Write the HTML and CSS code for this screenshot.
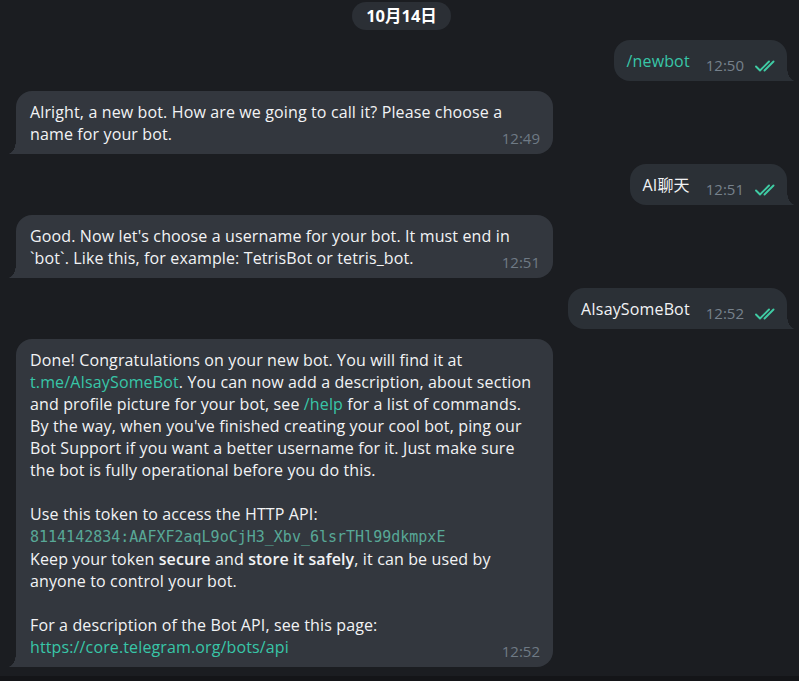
FILE: index.html
```html
<!DOCTYPE html>
<html lang="zh">
<head>
<meta charset="utf-8">
<link rel="stylesheet" href="styles.css">
</head>
<body>
<div class="chat">
  <div class="date-row"><span class="date">10月14日</span></div>

  <div class="msg out">
    <div class="bubble">
      <span class="text link">/newbot</span>
      <span class="time">12:50</span>
      <svg class="ticks" width="23" height="12" viewBox="0 0 23 12"><path d="M1 6.5 L5 10.5 L14 1.5 M9.5 10.5 L18.5 1.5" fill="none" stroke="#3fcca4" stroke-width="1.9" stroke-linecap="round" stroke-linejoin="round"/></svg>
    </div>
  </div>

  <div class="msg in">
    <div class="bubble">
      <div class="body">
        <div>Alright, a new bot. How are we going to call it? Please choose a</div>
        <div class="last"><span>name for your bot.</span><span class="time">12:49</span></div>
      </div>
    </div>
  </div>

  <div class="msg out">
    <div class="bubble">
      <span class="text">AI聊天</span>
      <span class="time">12:51</span>
      <svg class="ticks" width="23" height="12" viewBox="0 0 23 12"><path d="M1 6.5 L5 10.5 L14 1.5 M9.5 10.5 L18.5 1.5" fill="none" stroke="#3fcca4" stroke-width="1.9" stroke-linecap="round" stroke-linejoin="round"/></svg>
    </div>
  </div>

  <div class="msg in">
    <div class="bubble">
      <div class="body">
        <div>Good. Now let's choose a username for your bot. It must end in</div>
        <div class="last"><span>`bot`. Like this, for example: TetrisBot or tetris_bot.</span><span class="time">12:51</span></div>
      </div>
    </div>
  </div>

  <div class="msg out">
    <div class="bubble">
      <span class="text">AIsaySomeBot</span>
      <span class="time">12:52</span>
      <svg class="ticks" width="23" height="12" viewBox="0 0 23 12"><path d="M1 6.5 L5 10.5 L14 1.5 M9.5 10.5 L18.5 1.5" fill="none" stroke="#3fcca4" stroke-width="1.9" stroke-linecap="round" stroke-linejoin="round"/></svg>
    </div>
  </div>

  <div class="msg in">
    <div class="bubble">
      <div class="body">
        <div>Done! Congratulations on your new bot. You will find it at</div>
        <div><span class="link">t.me/AIsaySomeBot</span>. You can now add a description, about section</div>
        <div>and profile picture for your bot, see <span class="link">/help</span> for a list of commands.</div>
        <div>By the way, when you've finished creating your cool bot, ping our</div>
        <div>Bot Support if you want a better username for it. Just make sure</div>
        <div class="para">the bot is fully operational before you do this.</div>
        <div>Use this token to access the HTTP API:</div>
        <div><code class="token">8114142834:AAFXF2aqL9oCjH3_Xbv_6lsrTHl99dkmpxE</code></div>
        <div>Keep your token <b>secure</b> and <b>store it safely</b>, it can be used by</div>
        <div class="para">anyone to control your bot.</div>
        <div>For a description of the Bot API, see this page:</div>
        <div class="last"><span class="link">https://core.telegram.org/bots/api</span><span class="time">12:52</span></div>
      </div>
    </div>
  </div>
</div>
<div class="composer"></div>
</body>
</html>
```

FILE: styles.css
```css
html, body {
  margin: 0;
  padding: 0;
  background: #1b1d21;
  height: 100%;
  overflow: hidden;
}
body {
  font-family: "Open Sans", "Noto Sans CJK SC", sans-serif;
  font-size: 16px;
  line-height: 22px;
  color: #f2f3f5;
  display: flex;
  flex-direction: column;
}
.chat {
  flex: 1;
  display: flex;
  flex-direction: column;
  gap: 10px;
  padding: 2px 12px 0 16px;
}
.date-row {
  display: flex;
  justify-content: center;
}
.date {
  background: #2b2f35;
  color: #ffffff;
  font-weight: 700;
  font-size: 16.5px;
  line-height: 28px;
  height: 28px;
  padding: 0 14px;
  border-radius: 14px;
}
.msg {
  display: flex;
}
.msg.out {
  justify-content: flex-end;
}
.bubble {
  position: relative;
  box-sizing: border-box;
}
.msg.in .bubble {
  width: 537px;
  background: #33373e;
  border-radius: 16px 16px 16px 0;
  padding: 10px 13px 9px 14px;
}
.msg.in .bubble::before {
  content: "";
  position: absolute;
  left: -8px;
  bottom: 0;
  width: 8px;
  height: 14px;
  background: radial-gradient(8px 14px at 0 0, transparent 97%, #33373e 100%);
}
.msg.out .bubble {
  background: #2b3036;
  border-radius: 16px 16px 0 16px;
  padding: 10px 9px 9px 13px;
  display: flex;
  align-items: flex-end;
}
.msg.out .bubble::before {
  content: "";
  position: absolute;
  right: -8px;
  bottom: 0;
  width: 8px;
  height: 14px;
  background: radial-gradient(8px 14px at 100% 0, transparent 97%, #2b3036 100%);
}
.text {
  white-space: nowrap;
  letter-spacing: 0.15px;
}
.time {
  font-size: 15px;
  line-height: 16px;
  color: #6f7a85;
  margin-bottom: -1px;
  white-space: nowrap;
  letter-spacing: 0;
}
.msg.out .time {
  margin-left: 16px;
  color: #76818c;
}
.ticks {
  margin-left: 11px;
  margin-bottom: 0;
  display: block;
}
.body > div {
  white-space: nowrap;
  letter-spacing: 0.13px;
}
.last {
  display: flex;
  justify-content: space-between;
  align-items: flex-end;
}
.para {
  margin-bottom: 22px;
}
.link {
  color: #38c6a8;
}
.token {
  font-family: "DejaVu Sans Mono", monospace;
  font-size: 15px;
  letter-spacing: 0;
  color: #58a897;
}
b {
  font-weight: 600;
}
.composer {
  height: 5px;
  background: #141518;
}
```
